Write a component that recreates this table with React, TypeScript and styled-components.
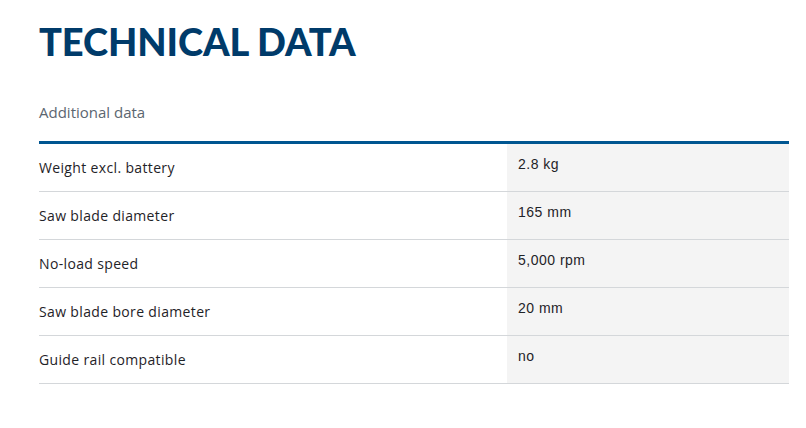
import React from "react";
import styled, { createGlobalStyle } from "styled-components";

const GlobalStyle = createGlobalStyle`
  html, body {
    margin: 0;
    padding: 0;
    background: #fff;
  }
`;

const Page = styled.div`
  padding: 19px 17px 0 39px;
  font-family: "Open Sans", "Noto Sans", sans-serif;
`;

const Title = styled.h1`
  margin: 0;
  font-family: Lato, "Open Sans", sans-serif;
  font-weight: 900;
  font-size: 38px;
  line-height: 44px;
  letter-spacing: -0.1px;
  color: #003b6a;
`;

const Subtitle = styled.h2`
  margin: 39px 0 0;
  font-weight: 400;
  font-size: 15px;
  line-height: 20px;
  color: #5b6670;
  padding-bottom: 19px;
  border-bottom: 3px solid #005691;
`;

const Table = styled.div`
  display: flex;
  flex-direction: column;
`;

const Row = styled.div`
  display: grid;
  grid-template-columns: 468px 1fr;
  box-sizing: border-box;
  height: 48px;
  border-bottom: 1px solid #d4d7da;
`;

const Label = styled.div`
  display: flex;
  align-items: center;
  font-size: 14px;
  letter-spacing: 0.35px;
  color: #1f2328;
`;

const Value = styled.div`
  background: #f4f4f4;
  padding: 12px 11px 0;
  font-family: "Liberation Sans", Arial, sans-serif;
  font-size: 14px;
  letter-spacing: 0.5px;
  color: #1f2328;
`;

const rows = [
  ["Weight excl. battery", "2.8 kg"],
  ["Saw blade diameter", "165 mm"],
  ["No-load speed", "5,000 rpm"],
  ["Saw blade bore diameter", "20 mm"],
  ["Guide rail compatible", "no"],
];

export default function App() {
  return (
    <>
      <GlobalStyle />
      <Page>
        <Title>TECHNICAL DATA</Title>
        <Subtitle>Additional data</Subtitle>
        <Table>
          {rows.map(([label, value]) => (
            <Row key={label}>
              <Label>{label}</Label>
              <Value>{value}</Value>
            </Row>
          ))}
        </Table>
      </Page>
    </>
  );
}
